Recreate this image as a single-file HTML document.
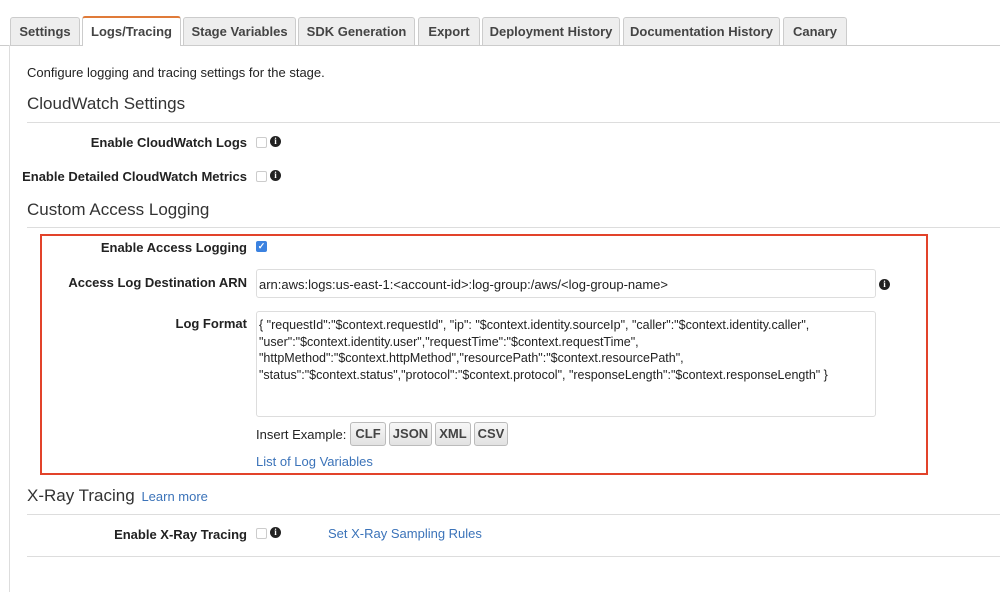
<!DOCTYPE html>
<html><head><meta charset="utf-8"><style>
*{box-sizing:border-box;margin:0;padding:0}
body{width:1000px;height:592px;background:#fff;font-family:"Liberation Sans",Arial,sans-serif;position:relative;overflow:hidden;color:#333}
.a{position:absolute;white-space:nowrap}
.tab{position:absolute;top:17px;height:28px;background:#eee;border:1px solid #ccc;border-bottom:none;border-radius:3px 3px 0 0;font-size:13px;font-weight:bold;color:#444;text-align:center;line-height:27px}
.tab.act{background:#fff;border-top:2px solid #e07b39;top:16px;height:30px;line-height:28px}
.h{font-size:17px;color:#333}
.line{position:absolute;height:1px;background:#ddd;left:27px;right:0}
.lbl{position:absolute;font-size:13px;font-weight:bold;color:#222;text-align:right;right:753px;white-space:nowrap}
.cb{position:absolute;width:11px;height:11px;border:1px solid #ccc;border-radius:2px;background:#fff}
.info{position:absolute;width:11px;height:11px;border-radius:50%;background:#222;color:#fff;font-size:9px;font-weight:bold;text-align:center;line-height:11px;font-family:"Liberation Serif",serif}
.btn{position:absolute;top:422px;height:24px;background:linear-gradient(#f7f7f7,#e2e2e2);border:1px solid #bbb;border-radius:3px;font-size:13px;font-weight:bold;color:#444;text-align:center;line-height:22px}
a,.lnk{color:#3b73b9;text-decoration:none}
</style></head><body>
<div class="a" style="left:0;right:0;top:45px;height:1px;background:#ccc"></div>
<div class="tab" style="left:10px;width:70px">Settings</div>
<div class="tab act" style="left:82px;width:99px">Logs/Tracing</div>
<div class="tab" style="left:183px;width:113px">Stage Variables</div>
<div class="tab" style="left:298px;width:117px">SDK Generation</div>
<div class="tab" style="left:418px;width:62px">Export</div>
<div class="tab" style="left:482px;width:138px">Deployment History</div>
<div class="tab" style="left:623px;width:157px">Documentation History</div>
<div class="tab" style="left:783px;width:64px">Canary</div>
<div class="a" style="left:9px;top:45px;width:1px;height:547px;background:#ddd"></div>

<div class="a" style="left:27px;top:65px;font-size:13px;color:#222">Configure logging and tracing settings for the stage.</div>
<div class="a h" style="left:27px;top:94px">CloudWatch Settings</div>
<div class="line" style="top:122px"></div>
<div class="lbl" style="top:135px">Enable CloudWatch Logs</div>
<div class="cb" style="left:256px;top:137px"></div><div class="info" style="left:270px;top:136px">i</div>
<div class="lbl" style="top:169px">Enable Detailed CloudWatch Metrics</div>
<div class="cb" style="left:256px;top:171px"></div><div class="info" style="left:270px;top:170px">i</div>
<div class="a h" style="left:27px;top:200px">Custom Access Logging</div>
<div class="line" style="top:227px"></div>

<div class="a" style="left:40px;top:234px;width:888px;height:241px;border:2px solid #e2432a"></div>
<div class="lbl" style="top:240px">Enable Access Logging</div>
<div class="a" style="left:256px;top:241px;width:11px;height:11px;border-radius:2px;background:#3b82e0;color:#fff;font-size:9px;line-height:11px;text-align:center;font-weight:bold">✓</div>
<div class="lbl" style="top:275px">Access Log Destination ARN</div>
<div class="a" style="left:256px;top:269px;width:620px;height:29px;border:1px solid #ddd;border-radius:3px;font-size:13px;color:#222;padding:7px 0 0 2px">arn:aws:logs:us-east-1:&lt;account-id&gt;:log-group:/aws/&lt;log-group-name&gt;</div>
<div class="info" style="left:879px;top:279px">i</div>
<div class="lbl" style="top:316px">Log Format</div>
<div class="a" style="left:256px;top:311px;width:620px;height:106px;border:1px solid #ddd;border-radius:3px;font-size:12.5px;color:#222;padding:5px 0 0 2px;line-height:16.5px;white-space:normal">{ "requestId":"$context.requestId", "ip": "$context.identity.sourceIp", "caller":"$context.identity.caller",<br>"user":"$context.identity.user","requestTime":"$context.requestTime",<br>"httpMethod":"$context.httpMethod","resourcePath":"$context.resourcePath",<br>"status":"$context.status","protocol":"$context.protocol", "responseLength":"$context.responseLength" }</div>
<div class="a" style="left:256px;top:427px;font-size:13px;color:#222">Insert Example:</div>
<div class="btn" style="left:350px;width:36px">CLF</div>
<div class="btn" style="left:389px;width:43px">JSON</div>
<div class="btn" style="left:435px;width:36px">XML</div>
<div class="btn" style="left:474px;width:34px">CSV</div>
<div class="a lnk" style="left:256px;top:454px;font-size:13px">List of Log Variables</div>

<div class="a h" style="left:27px;top:486px">X-Ray Tracing <span class="lnk" style="font-size:13px;margin-left:2px">Learn more</span></div>
<div class="line" style="top:514px"></div>
<div class="lbl" style="top:527px">Enable X-Ray Tracing</div>
<div class="cb" style="left:256px;top:528px"></div><div class="info" style="left:270px;top:527px">i</div>
<div class="a lnk" style="left:328px;top:526px;font-size:13px">Set X-Ray Sampling Rules</div>
<div class="line" style="top:556px"></div>
</body></html>
